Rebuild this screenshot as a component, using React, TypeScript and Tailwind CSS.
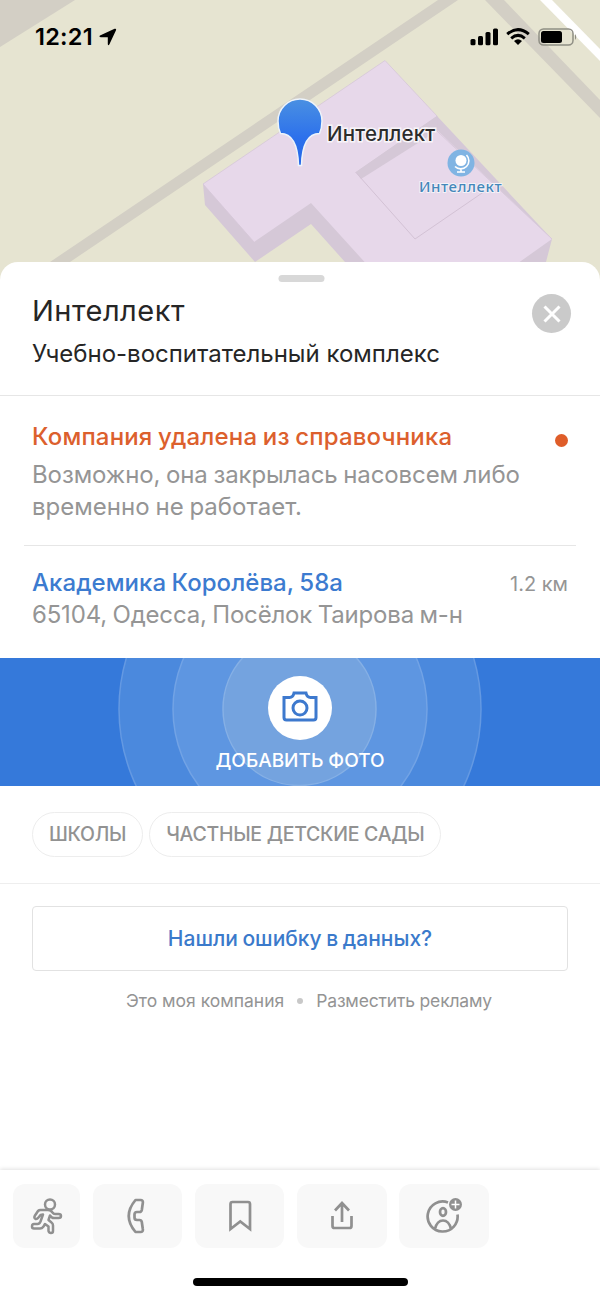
import type { ReactNode } from "react";

type ChipProps = {
  children: ReactNode;
};

type ActionButtonProps = {
  children: ReactNode;
  label: string;
  narrow?: boolean;
};

function MapView() {
  return (
    <svg className="absolute inset-0" width="600" height="300" viewBox="0 0 600 300" fill="none">
      <rect width="600" height="300" fill="#e6e4d1" />
      <path d="M0 0H75L0 47Z" fill="#d3cfc5" />
      <path d="M20 282L50 262L438 0H458L70 262L40 282Z" fill="#d3cfc5" />
      <path d="M485 0H504L600 100V118Z" fill="#d3cfc5" />
      <path d="M540 0H552L600 49V61Z" fill="#fff" />
      <path d="M203 184L205 205L255 262L311 224L370 290H500L546 262L552 239L437 116Z" fill="#d5c8d7" />
      <path
        d="M203 184L385 60.500L437 116L356 172L361 178L437 130L552 239L480 290H390L311 203L254 242Z"
        fill="#e7d8ea"
      />
      <path
        d="M254 242L203 184L385 60.500L437 116V131L552 239"
        stroke="#d6c6d8"
        strokeWidth="0.800"
      />
      <path d="M437 116V131L361 179L356 172Z" fill="#d5c8d7" />
      <path d="M355.500 172L415 239L485 191" stroke="#d3c2d5" />
      <path
        d="M278 121a22 22 0 1 1 44 0c0 5-.8 9-2.500 12.500-12 0-17.500 13-18 32h-3c-.5-19-6-32-18-32-1.700-3.500-2.500-7.500-2.500-12.500Z"
        fill="url(#pin)"
        stroke="#eef4fb"
        strokeWidth="1.500"
      />
      <circle cx="461" cy="163" r="13.500" fill="#80b4e3" />
      <circle cx="461" cy="160.500" r="5.500" fill="#fff" />
      <path d="M466.500 155a8 8 0 0 1-11.500 11.500M461 168v3.500M457 172h8" stroke="#fff" strokeWidth="1.600" />
      <defs>
        <linearGradient id="pin" x1="300" y1="99" x2="300" y2="165" gradientUnits="userSpaceOnUse">
          <stop stopColor="#4a90e2" />
          <stop offset="0.600" stopColor="#2c70ec" />
          <stop offset="1" stopColor="#2668e8" />
        </linearGradient>
      </defs>
    </svg>
  );
}

function StatusBar() {
  return (
    <div className="relative flex h-[74px] items-center pl-[35px] pr-[22px] text-black">
      <span className="text-[23.500px] font-semibold leading-none tracking-[0.250px]">12:21</span>
      <svg className="ml-[6px]" width="18" height="18" viewBox="0 0 18 18">
        <path d="M1 7.500L15.600.8Q17.600.2 17 2.200L10.300 16.500Q9.300 18 8.800 16.200V9.200H1.600Q-.5 8.600 1 7.500Z" fill="currentColor" />
      </svg>
      <svg className="ml-auto" width="108" height="20" viewBox="0 0 108 20" fill="none">
        <g fill="currentColor">
          <rect x="0.500" y="12" width="5" height="6.200" rx="1.500" />
          <rect x="8" y="9" width="5" height="9.200" rx="1.500" />
          <rect x="15.500" y="5" width="5" height="13.200" rx="1.500" />
          <rect x="23" y="1.500" width="5" height="16.700" rx="1.500" />
          <path d="M48 18l-4-4q4-3.500 8 0Z" />
        </g>
        <path d="M37.200 7.200Q48 -2 58.800 7.200M41.200 11.300Q48 5.500 54.800 11.300" stroke="currentColor" strokeWidth="3" />
        <rect x="69" y="2" width="34" height="16" rx="4.500" stroke="#8f8e84" strokeWidth="1.500" />
        <rect x="71" y="4" width="21" height="12" rx="2.500" fill="currentColor" />
        <path d="M105 7q2.500 3 0 6Z" fill="#8f8e84" />
      </svg>
    </div>
  );
}

function Chip({ children }: ChipProps) {
  return (
    <span className="flex h-[45px] items-center whitespace-nowrap rounded-full border border-[#ededed] px-4 text-[19.500px] font-medium tracking-[-0.280px] text-[#929292]">
      {children}
    </span>
  );
}

function ActionButton({ children, label, narrow }: ActionButtonProps) {
  return (
    <button
      type="button"
      aria-label={label}
      className={`flex h-16 items-center justify-center rounded-xl bg-[#f8f8f8] text-[#909090] ${narrow ? "w-[67px]" : "w-[89.500px]"}`}
    >
      {children}
    </button>
  );
}

export default function App() {
  return (
    <div className="relative flex h-[1298px] w-[600px] flex-col overflow-hidden bg-white font-['Inter',sans-serif]">
      <div className="relative h-[262px] shrink-0">
        <MapView />
        <StatusBar />
        <span className="absolute left-[327px] top-[121px] text-[20.500px] font-medium leading-[26px] tracking-[0.200px] text-[#2c2c2c] [paint-order:stroke] [-webkit-text-stroke:3px_#f8f5f9]">
          Интеллект
        </span>
        <span className="absolute left-[419px] top-[176px] font-['Noto_Sans',sans-serif] text-[15px] font-medium leading-5 tracking-[0.550px] text-[#4487ba] [paint-order:stroke] [-webkit-text-stroke:2px_#f4f1f8]">
          Интеллект
        </span>
      </div>

      <main className="relative flex flex-1 flex-col rounded-t-[18px] bg-white">
        <div className="mx-auto mt-[13px] h-[7px] w-[46px] shrink-0 translate-x-[1.500px] rounded-full bg-[#d8d8d8]" />
        <header className="flex h-[114px] shrink-0 justify-between border-b border-[#e6e6e6] pl-8 pr-[29px] text-[#262626]">
          <div className="pt-[11px]">
            <h1 className="text-[29px] leading-[36px] tracking-[0.500px]">Интеллект</h1>
            <p className="mt-[9px] whitespace-nowrap text-[24px] leading-[32px]">Учебно-воспитательный комплекс</p>
          </div>
          <button type="button" aria-label="Закрыть" className="mt-3 flex size-[39px] items-center justify-center rounded-full bg-[#cacaca]">
            <svg width="18" height="18" viewBox="0 0 18 18" stroke="#fff" strokeWidth="3">
              <path d="M1.500 1.500l15 15M16.500 1.500l-15 15" />
            </svg>
          </button>
        </header>

        <section className="mx-6 h-[150px] shrink-0 border-b border-[#e6e6e6] px-2 pt-[25px] text-[24px] leading-[32px]">
          <div className="flex items-center justify-between">
            <h2 className="font-medium tracking-[0.170px] text-[#dc602d] [word-spacing:-1px]">Компания удалена из справочника</h2>
            <span className="mt-[7px] size-[13px] rounded-full bg-[#df5d29]" />
          </div>
          <p className="mt-[6px] whitespace-nowrap tracking-[-0.100px] text-[#959595] [word-spacing:-1px]">
            Возможно, она закрылась насовсем либо
            <br />
            <span className="tracking-[0.020px]">временно не работает.</span>
          </p>
        </section>

        <section className="h-[112px] shrink-0 px-8 pt-[21px] text-[24px] leading-[32px]">
          <div className="flex h-8 justify-between">
            <a className="font-medium tracking-[0.050px] text-[#3c7bd0] [word-spacing:-1px]">Академика Королёва, 58а</a>
            <span className="pt-px text-[20px] text-[#959595]">1.2 км</span>
          </div>
          <p className="tracking-[-0.180px] text-[#959595] [word-spacing:-1px]">65104, Одесса, Посёлок Таирова м-н</p>
        </section>

        <button type="button" className="relative flex h-[128px] shrink-0 flex-col items-center overflow-hidden bg-[#3579da] pt-[18px]">
          <svg className="absolute inset-0" width="600" height="128" viewBox="0 0 600 128">
            <circle cx="300" cy="51" r="181" fill="#4b89dd" stroke="#6499e2" strokeWidth="1.500" />
            <circle cx="300" cy="51" r="127" fill="#5e96e1" stroke="#72a3e5" strokeWidth="1.500" />
            <circle cx="299.500" cy="51" r="76.500" fill="#74a3df" stroke="#86b0e5" strokeWidth="1.500" />
          </svg>
          <span className="relative flex size-16 items-center justify-center rounded-full bg-white">
            <svg width="36" height="36" viewBox="0 0 36 36" fill="none" stroke="#3d79ce" strokeWidth="3">
              <path d="M2 7.500H7.500Q11 7.500 12 3H24Q25 7.500 28.500 7.500H34V27.500Q34 30 31.500 30H4.500Q2 30 2 27.500Z" />
              <circle cx="18" cy="18" r="7" />
            </svg>
          </span>
          <span className="relative mt-[9px] text-[19px] font-medium leading-6 text-white">ДОБАВИТЬ ФОТО</span>
        </button>

        <div className="flex h-[98px] shrink-0 gap-[6px] border-b border-[#eeeeee] px-8 pt-[26px]">
          <Chip>ШКОЛЫ</Chip>
          <Chip>ЧАСТНЫЕ ДЕТСКИЕ САДЫ</Chip>
        </div>

        <button
          type="button"
          className="mx-8 mt-[22px] h-[65px] shrink-0 rounded-[4px] border border-[#e2e2e2] text-[21px] font-medium text-[#3b7acb] [word-spacing:-1px]"
        >
          Нашли ошибку в данных?
        </button>
        <div className="mt-[18px] flex items-center pl-[126px] text-[17.500px] leading-6 text-[#949494]">
          <a>Это моя компания</a>
          <span className="mx-[13px] size-[6px] rounded-full bg-[#c8c8c8]" />
          <a className="tracking-[-0.170px]">Разместить рекламу</a>
        </div>
      </main>

      <footer className="relative h-[128px] shrink-0 bg-white pt-[14px] shadow-[0_-1px_4px_rgba(0,0,0,0.12)]">
        <div className="flex gap-[12.700px] pl-[13px]">
          <ActionButton label="Маршрут" narrow>
            <svg width="34" height="38" viewBox="0 0 34 38" fill="none" stroke="currentColor" strokeWidth="2.500" strokeLinejoin="round">
              <circle cx="20" cy="7.500" r="5" />
              <path d="M16 13H10.500Q9 13 8 14L5 18.500Q3.500 21 5.500 22Q7 22.500 8.500 20.500L10.500 18L13 17.500L10.500 24.500Q9.500 27 7.500 27H4Q2 27 2 29.500Q2 31.500 4 31.500H10Q12 31.500 13.500 29.500L15 27L18.500 29.500V34Q19 36 21 36Q23 36 23 34V28.500Q23 26.500 21.500 25.500L18.500 23L20 18.500Q21.500 21 24 21H28.500Q31 21 31 19Q31 17 28.500 17H25Q23.500 17 22.500 15.500Q21 13 18 13Z" />
            </svg>
          </ActionButton>
          <ActionButton label="Позвонить">
            <svg width="20" height="38" viewBox="0 0 20 38" fill="none" stroke="currentColor" strokeWidth="2.700" strokeLinejoin="round">
              <path d="M8.500 3h5q2.800 0 2.300 3l-1 7q-.4 2-2.300 2H10q-2.500 0-2.500 2.500v3q0 2.500 2.500 2.500h2.500q1.900 0 2.300 2l1 7q.5 3-2.300 3h-5Q-5 19 8.500 3Z" />
            </svg>
          </ActionButton>
          <ActionButton label="Сохранить">
            <svg width="24" height="34" viewBox="0 0 24 34" fill="none" stroke="currentColor" strokeWidth="2.700">
              <path d="M2.500 30V5q0-2 2-2h15.500q2 0 2 2v25l-9.750-7.500Z" />
            </svg>
          </ActionButton>
          <ActionButton label="Поделиться">
            <svg width="24" height="32" viewBox="0 0 24 32" fill="none" stroke="currentColor" strokeWidth="2.700">
              <path d="M2.500 16v10q0 2 2 2h15q2 0 2-2V16M12 22V3M5 10.500l7-7.500 7 7.500" />
            </svg>
          </ActionButton>
          <ActionButton label="Добавить контакт">
            <svg width="36" height="36" viewBox="0 0 36 36" fill="none" stroke="currentColor" strokeWidth="2.700">
              <path d="M22 4.500a15 15 0 1 0 9.500 12M9 31q2-8.500 8-8.500t8 8.500" />
              <ellipse cx="17" cy="14" rx="3" ry="3.800" />
              <circle cx="29.500" cy="6.500" r="6.500" fill="currentColor" stroke="none" />
              <path d="M25.500 6.500h8M29.500 2.500v8" stroke="#fff" strokeWidth="1.500" />
            </svg>
          </ActionButton>
        </div>
        <div className="mx-auto mt-[30px] h-2 w-[215px] rounded-full bg-black" />
      </footer>
    </div>
  );
}
